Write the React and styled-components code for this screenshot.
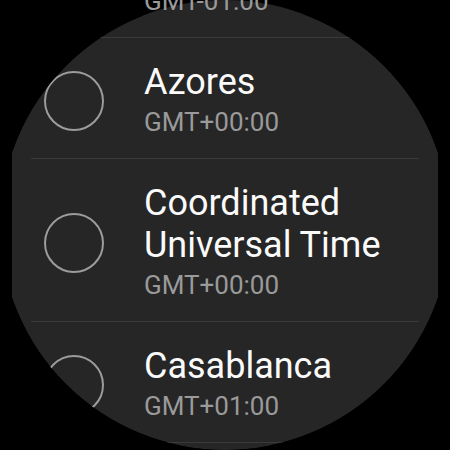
import React from 'react'
import styled, { createGlobalStyle } from 'styled-components'

const zones = [
  { id: 'cv', title: 'Cape Verde', offset: 'GMT-01:00' },
  { id: 'az', title: 'Azores', offset: 'GMT+00:00' },
  { id: 'utc', title: 'Coordinated Universal Time', offset: 'GMT+00:00' },
  { id: 'cas', title: 'Casablanca', offset: 'GMT+01:00' },
  { id: 'dub', title: 'Dublin', offset: 'GMT+01:00' },
]

const App = () => {
  return (
    <>
      <GlobalStyle />
      <Screen>
        <ZoneList>
          {zones.map(({ id, title, offset }) => (
            <ZoneRow key={id}>
              <Radio />
              <ZoneText>
                <ZoneTitle>{title}</ZoneTitle>
                <ZoneOffset>{offset}</ZoneOffset>
              </ZoneText>
            </ZoneRow>
          ))}
        </ZoneList>
      </Screen>
    </>
  )
}

const GlobalStyle = createGlobalStyle`
  html,
  body {
    margin: 0;
    background: #000;
  }
  body {
    font-family: Roboto, 'Noto Sans', sans-serif;
  }
`

const Screen = styled.div`
  position: relative;
  isolation: isolate;
  width: 450px;
  height: 450px;
  overflow: hidden;
  /* round watch face, the scrolled-off text at the top is left unclipped */
  clip-path: path(
    'M225 0 A225 225 0 0 1 225 450 A225 225 0 0 1 225 0 Z M140 0 H290 V16 H140 Z'
  );

  &::before {
    content: '';
    position: absolute;
    top: 0;
    bottom: 0;
    left: 12px;
    right: 12px;
    z-index: -1;
    background: #262626;
    clip-path: circle(225px at 213px 225px);
  }
`

const ZoneList = styled.div`
  display: flex;
  flex-direction: column;
  /* scroll position of the list */
  margin-top: -83px;
`

const ZoneRow = styled.div`
  display: flex;
  align-items: center;
  gap: 40px;
  margin: 0 31px;
  padding: 23px 0 17px 13px;
  border-bottom: 1px solid #3a3a3a;
`

const Radio = styled.span`
  flex-shrink: 0;
  box-sizing: border-box;
  width: 60px;
  height: 60px;
  border: 2px solid #9c9c9c;
  border-radius: 50%;
`

const ZoneText = styled.div`
  display: flex;
  flex-direction: column;
  min-width: 0;
`

const ZoneTitle = styled.div`
  font-size: 36px;
  line-height: 42px;
  color: #fafafa;
`

const ZoneOffset = styled.div`
  font-size: 26px;
  line-height: 38px;
  color: #9a9a9a;
`

export default App
